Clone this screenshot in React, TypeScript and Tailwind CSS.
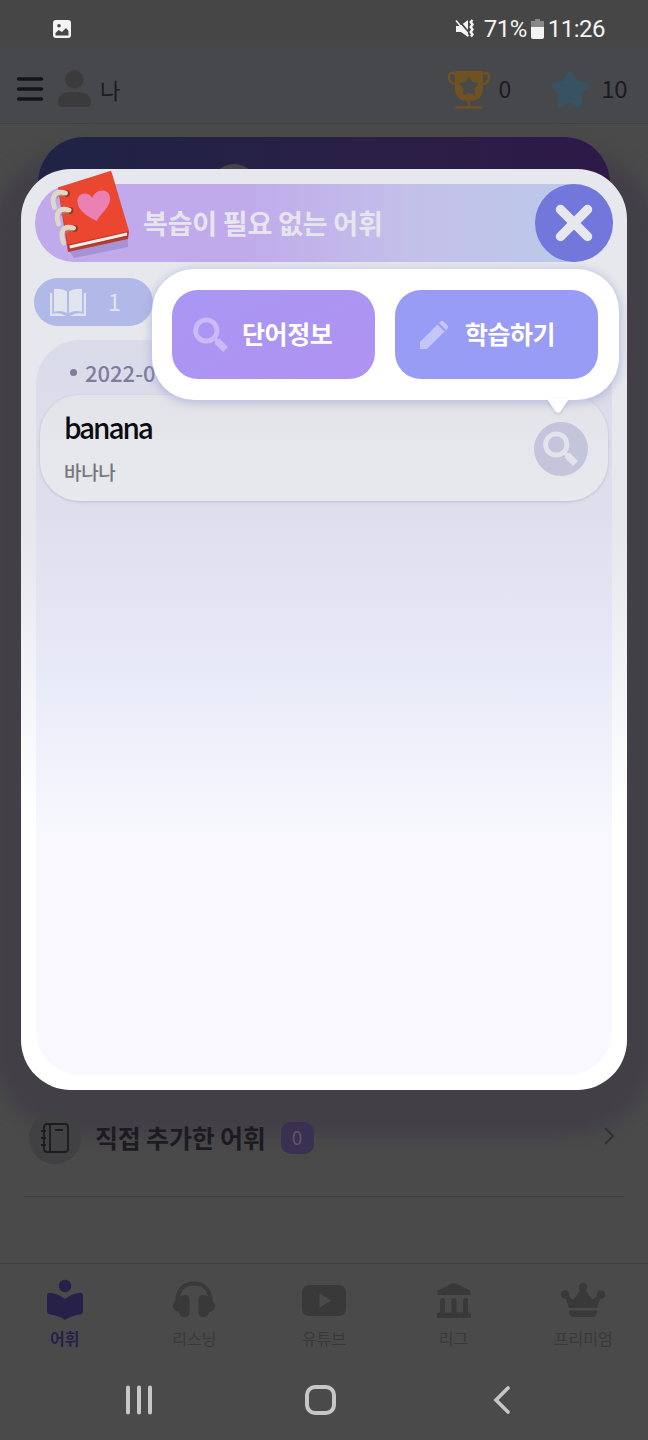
import React from "react";

const CJK = "font-['Noto_Sans_CJK_KR','Noto_Sans',sans-serif]";

function Magnifier({ className }: { className: string }) {
  return (
    <svg viewBox="0 0 36 36" className={className} fill="none" stroke="currentColor">
      <circle cx="13.3" cy="13.5" r="10.7" strokeWidth="4.8" />
      <path d="M21 21l3.5 3.5" strokeWidth="4" />
      <path d="M24 24l8.5 8.5" strokeWidth="7" />
    </svg>
  );
}

function Notebook() {
  return (
    <svg viewBox="0 0 82 92" className="h-[92px] w-[82px] shrink-0">
      <path d="M20 83l5 7 54-11v-9z" fill="#9d8bd0" opacity=".75" />
      <path d="M9 20l8 30 61 11 2 3-1 7-60 13z" fill="#bd3a28" />
      <path d="M9 19.500L60.500 3.200q1.700-.4 2.200 1.300L80 63 19 76.500 9.500 22z" fill="#ea4630" />
      <path d="M20.500 77.500L78 64.500v3.200L21 81z" fill="#fbeceb" />
      <path d="M20.500 81L78 68" stroke="#7f3429" strokeWidth=".7" />
      <path d="M47.700 53C42 50 29 44 28.500 33.500 28 25 39 22.500 43.500 30c2-8.500 14.500-10.500 17.200-2.500C63.500 37 53 44 47.700 53z" fill="#ea80b4" />
      <g fill="none" stroke="#8f3a25" strokeWidth="2.600">
        <circle cx="17.500" cy="25.500" r="2.100" />
        <circle cx="21" cy="42.500" r="2.100" />
        <circle cx="25.500" cy="60.500" r="2.100" />
      </g>
      <path d="M16.500 25C5 22 2 29 5.500 39.500M20 42C9 39 6 46 9.500 56M24.500 60c-11-3-14 4-10 15" stroke="#ded8c9" strokeWidth="4.800" fill="none" strokeLinecap="round" />
      <path d="M16 28q-7-2-8 2.500M20 45q-7-2-8 2.500M24.500 63q-7-2-8 2.500" stroke="#a88d7c" strokeWidth="1.200" fill="none" />
    </svg>
  );
}

const tabs = [
  {
    label: "어휘",
    active: true,
    icon: (
      <svg viewBox="0 0 44 44" className="h-[44px] w-[44px]" fill="currentColor">
        <circle cx="22" cy="8" r="6.200" />
        <path d="M4 18q0-4 4-3 8 1 14 6 6-5 14-6 4-1 4 3v15q0 3-3 3.500-9 1-15 5.500-6-4.500-15-5.500Q4 36 4 33z" />
      </svg>
    ),
  },
  {
    label: "리스닝",
    icon: (
      <svg viewBox="0 0 44 44" className="h-[44px] w-[44px]" fill="currentColor">
        <path d="M3.500 25C2.500 11 11 3.500 22 3.500S41.500 11 40.500 25h-4C37 13 31 7.500 22 7.500S7 13 7.500 25z" />
        <path d="M7 21q1-4 6-4 4.500 0 4.500 4v14q0 4-4.500 4h-1q-4 0-5-5-6-2-6-6t6-7zM37 21q-1-4-6-4-4.500 0-4.500 4v14q0 4 4.500 4h1q4 0 5-5 6-2 6-6t-6-7z" />
      </svg>
    ),
  },
  {
    label: "유튜브",
    icon: (
      <svg viewBox="0 0 44 44" className="h-[44px] w-[44px]" fill="currentColor">
        <path fillRule="evenodd" d="M8 7h28q8 0 8 8v15q0 8-8 8H8q-8 0-8-8V15q0-8 8-8zm9.500 8.500v14l12-7z" />
      </svg>
    ),
  },
  {
    label: "리그",
    icon: (
      <svg viewBox="0 0 44 44" className="h-[44px] w-[44px]" fill="currentColor">
        <path d="M6 12.500L20 5.500q2-1 4 0l14 7q2 4.500-1 4.500H7q-3 0-1-4.500zM7 34.500h30q2 0 2 1.500v4H5v-4q0-1.500 2-1.500z" />
        <path d="M10.500 22.500V36M22 22.500V36M33.500 22.500V36" stroke="currentColor" strokeWidth="5" strokeLinecap="round" />
      </svg>
    ),
  },
  {
    label: "프리미엄",
    icon: (
      <svg viewBox="0 0 44 44" className="h-[44px] w-[44px]" fill="currentColor">
        <circle cx="22" cy="9" r="4.200" />
        <circle cx="4" cy="16.500" r="4.200" />
        <circle cx="40" cy="16.500" r="4.200" />
        <path d="M20 11h4l6 9q1.500 2 3.500.5l4-3.500 2.500 1-4 12H8L4 18l2.500-1 4 3.500q2 1.500 3.500-.5zM8 32.500h28q0 6.500-4 6.500H12q-4 0-4-6.500z" />
      </svg>
    ),
  },
];

function StatusBar() {
  return (
    <div className="flex h-[47px] items-center bg-[#464646] pl-[53px] pr-[43px] pt-[11px] text-[#f4f4f4]">
      <svg viewBox="0 0 18 18" className="h-[18px] w-[18px]">
        <path fillRule="evenodd" fill="currentColor" d="M3 0h12q3 0 3 3v12q0 3-3 3H3q-3 0-3-3V3q0-3 3-3zm3 4a1.800 1.800 0 100 3.600A1.800 1.800 0 006 4zM2.500 15.500h13V11L13 8l-4 4-3.500-2-3 3z" />
      </svg>
      <svg viewBox="0 0 20 20" className="ml-auto h-[20px] w-[20px]">
        <path d="M1 7h4l8-6v17l-7-5H1z" fill="currentColor" />
        <path d="M2.500 0l12 14" stroke="#464646" strokeWidth="1.800" />
        <path d="M1 1.500L13.500 17" stroke="currentColor" strokeWidth="1.600" />
        <path d="M17.500 1l-1.800 2 1.800 2.500-1.800 2.500 1.800 2.500-1.800 2.500 1.800 2.500-1.500 2" fill="none" stroke="currentColor" strokeWidth="2.400" />
      </svg>
      <span className="ml-[9px] font-[Roboto,sans-serif] text-[24px] leading-[30px] tracking-[-0.500px]">71%</span>
      <svg viewBox="0 0 13 20" className="ml-[4px] mr-[4px] h-[20px] w-[13px] shrink-0">
        <path d="M4 0h5v2h4v6H0V2h4z" fill="#888" />
        <path d="M0 8h13v10q0 2-2 2H2q-2 0-2-2z" fill="currentColor" />
      </svg>
      <span className="font-[Roboto,sans-serif] text-[24px] leading-[30px] tracking-[-0.500px]">11:26</span>
    </div>
  );
}

function TopBar() {
  return (
    <div className="flex h-[77px] items-center border-b border-[#414144] bg-[#47484b] pl-[16px] pr-[21px] pt-[7px] text-[#1b1b20]">
      <svg viewBox="0 0 28 28" className="h-[28px] w-[28px]" stroke="#131318" strokeWidth="3.400" strokeLinecap="round">
        <path d="M2.500 4h23M2.500 14h23M2.500 24h23" />
      </svg>
      <svg viewBox="0 0 33 38" className="ml-[14px] h-[38px] w-[33px]" fill="#3b3b3c">
        <circle cx="16.500" cy="9.500" r="9.200" />
        <path d="M0 32q1-10 12-10h9q11 0 12 10 0 5-5 5H5q-5 0-5-5z" />
      </svg>
      <span className="ml-[9px] text-[22px] leading-[30px]">나</span>
      <svg viewBox="0 0 44 40" className="ml-auto h-[40px] w-[44px]">
        <path d="M8 5Q2 2 2 8q0 6 6 7M36 5q6-3 6 3 0 6-6 7M22 30v8M9.500 38.500h25" fill="none" stroke="#705221" strokeWidth="2.400" strokeLinecap="round" />
        <path d="M8 2h28v17q0 13-14 13T8 19z" fill="#705221" />
        <path d="M22 9l2.700 5 5.300 1-4 4.500 1 5.500-5-2.500-5 2.500 1-5.500-4-4.500 5.300-1z" fill="#4a4a4c" stroke="#4a4a4c" strokeWidth="2.500" strokeLinejoin="round" />
      </svg>
      <span className="mb-[2px] ml-[8px] text-[23px] leading-[30px]">0</span>
      <svg viewBox="0 0 38 38" className="ml-[40px] h-[38px] w-[38px] shrink-0">
        <path d="M19 3.500l5.500 9.500 11 2-7.500 8.500 1 11.500-10-5-10 5 1-11.500L2.500 15l11-2z" fill="#385262" stroke="#385262" strokeWidth="5" strokeLinejoin="round" />
      </svg>
      <span className="mb-[2px] ml-[12px] text-[24px] leading-[30px] tracking-[-0.500px]">10</span>
    </div>
  );
}

function NavigationBar() {
  return (
    <div className="flex h-[80px] items-center pl-[125px] pr-[137px] text-[#c7c7c7]">
      <svg viewBox="0 0 28 30" className="h-[30px] w-[28px]" stroke="currentColor" strokeWidth="4">
        <path d="M3 2.500v25M14 2.500v25M25 2.500v25" strokeLinecap="round" />
      </svg>
      <div className="ml-[152px] h-[30px] w-[31px] rounded-[10px] border-[4px] border-[#c7c7c7]" />
      <svg viewBox="0 0 18 30" className="ml-auto h-[30px] w-[18px]" fill="none" stroke="currentColor" strokeWidth="3.600">
        <path d="M15 3L3 15l12 12" strokeLinecap="round" />
      </svg>
    </div>
  );
}

function Screen() {
  return (
    <div className="flex h-[1440px] w-[648px] flex-col">
      <StatusBar />
      <TopBar />
      <div className="relative flex h-[976px] flex-col px-[38px] pt-[13px]">
        <div className="absolute inset-x-[-8px] top-[24px] h-[988px] rounded-[90px] bg-[#423f47] blur-[9px]" />
        <div className="relative h-[100px] overflow-hidden rounded-t-[46px] bg-linear-to-r from-[#202246] from-10% via-[#2b1f46] via-60% to-[#2e1948]">
          <div className="mx-auto mt-[27px] h-[46px] w-[46px] -translate-x-[90px] rounded-full bg-[#46434c]" />
        </div>
      </div>
      <div className="relative mx-[24px] flex h-[97px] items-center border-b border-[#414143] pl-[5px] pr-[9px] pb-[21px] text-[#1d1b21]">
        <div className="flex h-[52px] w-[52px] items-center justify-center rounded-full bg-[#414144]">
          <svg viewBox="0 0 28 32" className="h-[32px] w-[28px]" fill="none" stroke="currentColor" strokeWidth="1.800">
            <rect x="3" y="2" width="24" height="28" rx="3" />
            <path d="M9 2v28M14 8h8M0 9h5M0 16h5M0 23h5" />
          </svg>
        </div>
        <span className="mb-[2px] ml-[14px] text-[25px] font-bold leading-[32px] tracking-[-0.200px]">직접 추가한 어휘</span>
        <span className="ml-[15px] flex h-[32px] w-[33px] items-center justify-center rounded-[10px] bg-[#393052] text-[19px] text-[#5d5667]">0</span>
        <svg viewBox="0 0 12 18" className="mb-[4px] ml-auto h-[18px] w-[12px]" fill="none" stroke="#303032" strokeWidth="2">
          <path d="M2 1l8 8-8 8" />
        </svg>
      </div>
      <div className="mt-auto flex h-[97px] shrink-0 border-t border-[#3e3e3e] pt-[14px]">
        {tabs.map((tab) => (
          <div key={tab.label} className={tab.active ? "flex flex-1 flex-col items-center font-bold text-[#272049]" : "flex flex-1 flex-col items-center text-[#393939]"}>
            {tab.icon}
            <span className="mt-[4px] text-[16px] leading-[24px]">{tab.label}</span>
          </div>
        ))}
      </div>
      <NavigationBar />
    </div>
  );
}

function ActionPopover() {
  return (
    <div className="absolute left-[152px] top-[269px] h-[131px] w-[467px] rounded-[42px] bg-white shadow-[0_2px_9px_2px_rgba(145,152,205,0.45)]">
      <div className="flex h-full items-center gap-[20px] pl-[20px]">
        <button className="flex h-[89px] w-[203px] items-center rounded-[26px] bg-linear-to-br from-[#a997f3] to-[#b092f1] pl-[21px] text-white">
          <Magnifier className="h-[36px] w-[36px] text-[#cbbaf9]" />
          <span className="mb-[3px] ml-[13px] text-[25px] font-bold leading-[34px] tracking-[-0.400px]">단어정보</span>
        </button>
        <button className="flex h-[89px] w-[203px] items-center rounded-[26px] bg-[#999cf4] pl-[24px] text-white">
          <svg viewBox="0 0 30 30" className="h-[30px] w-[30px]" fill="#c4c5f9">
            <path d="M1 22L18.500 4.500l7 7L8 29H1zM20 3l1.500-1.500q1.500-1.500 3 0l4 4q1.500 1.500 0 3L27 10z" />
          </svg>
          <span className="mb-[3px] ml-[16px] text-[25px] font-bold leading-[34px] tracking-[-0.500px]">학습하기</span>
        </button>
      </div>
      <svg viewBox="0 0 22 15" className="absolute left-[395px] top-[130px] h-[15px] w-[22px] drop-shadow-[0_2px_2px_rgba(135,145,200,0.35)]">
        <path d="M0 0h22l-8.500 12.500q-2.500 2.500-5 0z" fill="#fff" />
      </svg>
    </div>
  );
}

function VocabularyDialog() {
  return (
    <div className="absolute left-[21px] top-[169px] flex h-[921px] w-[606px] flex-col rounded-[50px] bg-linear-to-b from-[#e6e8ed] from-40% to-white to-70% px-[14px] pb-[15px] pt-[15px]">
      <div className="flex h-[78px] shrink-0 items-center rounded-full bg-linear-to-r from-[#c0aaeb] from-35% via-[#c3c0e9] via-65% to-[#bacbeb]">
        <div className="-mt-[18px] ml-[14px] flex">
          <Notebook />
        </div>
        <span className="ml-[12px] text-[27px] font-bold leading-[36px] tracking-[-0.200px] text-[#e6e5ee]">복습이 필요 없는 어휘</span>
        <button className="ml-auto flex h-[78px] w-[78px] items-center justify-center rounded-full bg-[#7277db]">
          <svg viewBox="0 0 38 38" className="h-[38px] w-[38px]" stroke="#e6e8ee" strokeWidth="9.500" strokeLinecap="round">
            <path d="M5.500 5.500l27 27M32.500 5.500l-27 27" />
          </svg>
        </button>
      </div>
      <div className="-ml-[1px] mt-[16px] flex h-[48px] w-[119px] shrink-0 items-center rounded-full bg-[#b1b9e8] pl-[16px] text-[#e3e5ee]">
        <svg viewBox="0 0 36 28" className="h-[28px] w-[36px]" fill="currentColor">
          <path d="M4 1q8-1 13 2.500V25Q11 21.500 4 24zM32 1q-8-1-13 2.500V25q6-3.500 13-1z" />
          <path d="M0 5h2.200v21q8-2 13.800 2H0zM36 5h-2.200v21q-8-2-13.800 2h16z" />
        </svg>
        <span className="mb-[2px] ml-[22px] text-[23px] leading-[30px]">1</span>
      </div>
      <div className="mx-[1px] mt-[14px] flex-1 rounded-[44px] bg-[linear-gradient(to_bottom,#dadbe9_0%,#dfdeec_23%,#e6e5f4_38%,#e9ebf8_47%,#f1f1fc_56%,#f8f8fe_68%)] px-[4px] pt-[16px]">
        <div className="flex h-[32px] items-center gap-[8px] pl-[30px] text-[#7d7d9f]">
          <span className="h-[7px] w-[7px] rounded-full bg-[#7d7d9f]" />
          <span className="text-[22px] font-medium leading-[32px]">2022-0</span>
        </div>
        <div className="mt-[7px] flex h-[106px] items-center justify-between rounded-[40px] bg-linear-to-b from-[#e3e4e9] to-[#e7e9ed] pl-[24px] pr-[20px] shadow-[0_1px_3px_rgba(150,150,180,0.45)]">
          <div className="flex flex-col gap-[14px] pb-[1px]">
            <span className="text-[28px] font-medium leading-[34px] tracking-[-2.100px] text-[#0b0c0f]">banana</span>
            <span className="text-[19px] font-medium leading-[28px] tracking-[-0.300px] text-[#77777b]">바나나</span>
          </div>
          <button className="mt-[2px] flex h-[54px] w-[54px] items-center justify-center rounded-full bg-[#c4c4db] text-[#e2e3eb]">
            <Magnifier className="h-[36px] w-[36px]" />
          </button>
        </div>
      </div>
    </div>
  );
}

export default function App() {
  return (
    <main className={`relative h-[1440px] w-[648px] overflow-hidden bg-[#4a4a4a] ${CJK}`}>
      <Screen />
      <VocabularyDialog />
      <ActionPopover />
    </main>
  );
}
